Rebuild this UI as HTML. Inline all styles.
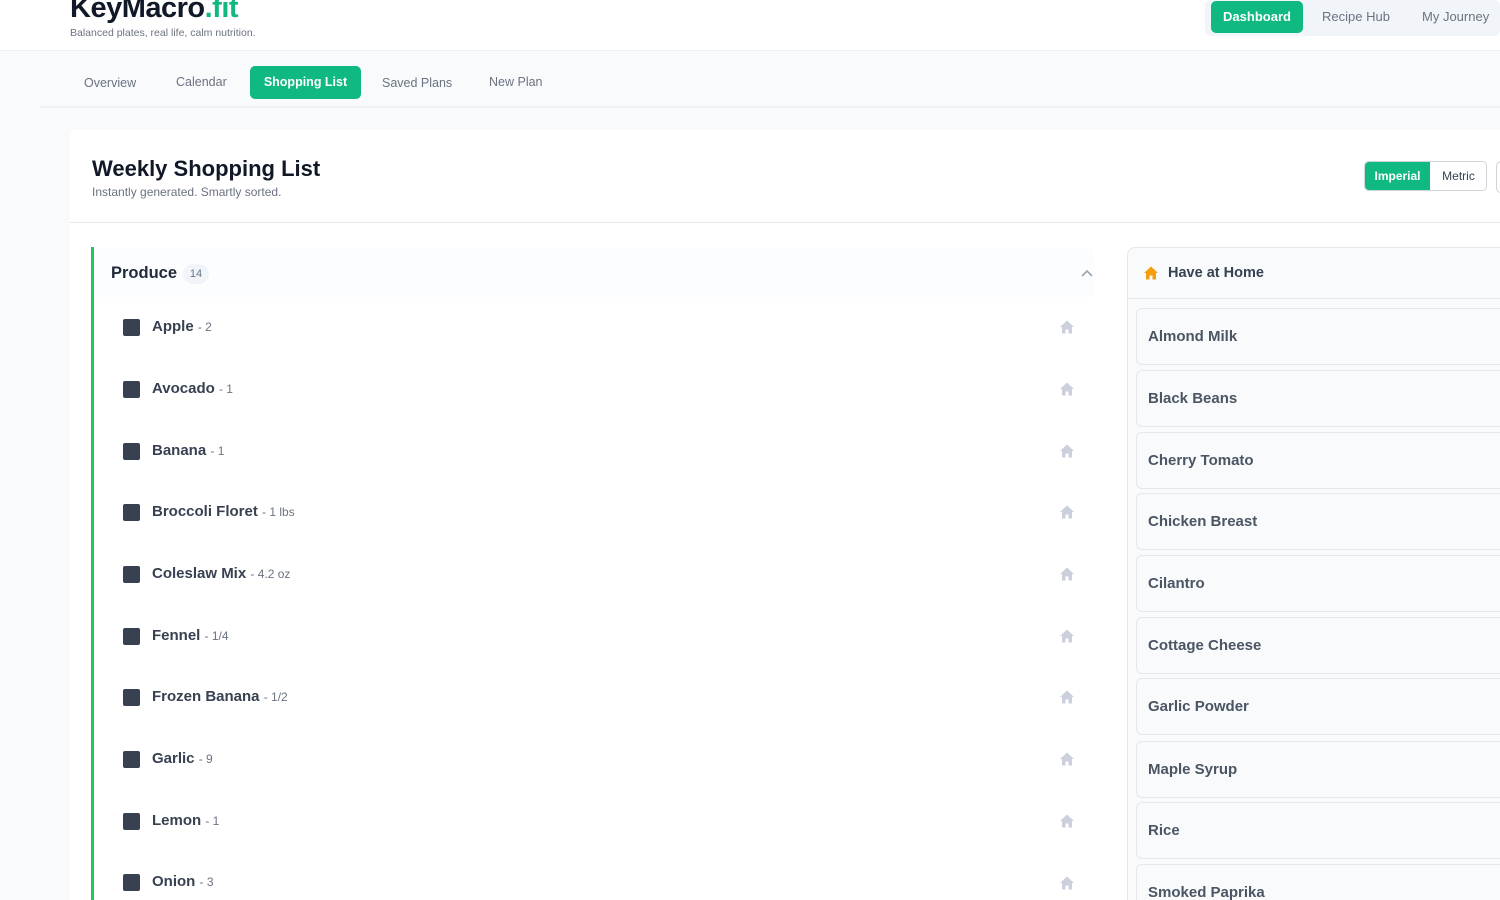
<!DOCTYPE html>
<html style="width:1500px;height:900px;overflow:hidden"><head><style>
*{margin:0;padding:0;box-sizing:border-box}
body{width:1500px;height:900px;overflow:hidden;background:#f8fafc;font-family:"Liberation Sans",sans-serif;position:relative}
.a{position:absolute}
.hdr{left:0;top:0;width:1500px;height:51px;background:#fff;border-bottom:1px solid #eef1f4}
.logo{left:70px;top:-8px;font-size:29px;font-weight:bold;color:#111827;letter-spacing:-0.5px}
.logo span{color:#10b981}
.tag{left:70px;top:27px;font-size:10.5px;color:#6b7280}
.topnav{left:1205px;top:0;width:295px;height:36px;background:#f1f5f9;border-radius:6px}
.dash{left:1211px;top:1px;width:92px;height:32px;background:#10b981;border-radius:5px;color:#fff;font-weight:bold;font-size:13px;text-align:center;line-height:32px}
.tn{top:9px;font-size:13px;color:#6b7280}
.sub{left:40px;top:106px;width:1460px;height:2px;background:#eef1f4}
.st{top:76px;font-size:12.5px;color:#6b7280}
.sl{left:250px;top:66px;width:111px;height:33px;background:#10b981;border-radius:5px;color:#fff;font-weight:bold;font-size:12.5px;text-align:center;line-height:33px}
.card{left:70px;top:130px;width:1440px;height:770px;background:#fff}
.ttl{left:92px;top:156px;font-size:22px;font-weight:bold;color:#111827}
.stt{left:92px;top:185px;font-size:12px;color:#6b7280}
.tog{left:1364px;top:161px;width:123px;height:30px;border:1px solid #d1d5db;border-radius:5px;overflow:hidden;background:#fff}
.tog div{position:absolute;top:0;height:28px;line-height:28px;font-size:12px;text-align:center}
.hl{left:70px;top:222px;width:1440px;height:1px;background:#e5e7eb}
.green{left:91px;top:247px;width:3px;height:653px;background:#22c55e}
.ph{left:94px;top:249px;width:1000px;height:48px;background:#fcfdfe}
.pt{left:111px;top:264px;font-size:16.5px;font-weight:bold;color:#1f2937}
.badge{left:183px;top:264px;width:26px;height:20px;border-radius:10px;background:#f1f5f9;font-size:11px;color:#64748b;text-align:center;line-height:20px}
.cb{left:123px;width:17px;height:17px;background:#374151;border-radius:2px}
.it{left:152px;font-size:15px;font-weight:bold;color:#374151}
.it span{font-weight:normal;font-size:12px;color:#6b7280}
.panel{left:1127px;top:247px;width:400px;height:700px;background:#f8fafc;border:1px solid #e5e7eb;border-radius:8px}
.ph2{left:1128px;top:298px;width:380px;height:1px;background:#e5e7eb}
.hat{left:1168px;top:265px;font-size:14.5px;font-weight:bold;color:#374151}
.box{left:1136px;width:380px;height:57px;border:1px solid #e5e7eb;border-radius:6px;background:#f8fafc;font-size:15px;font-weight:bold;color:#4b5563;padding-left:11px;line-height:55px}
</style></head><body>
<div class="a hdr"></div>
<div class="a logo">KeyMacro<span>.fit</span></div>
<div class="a tag">Balanced plates, real life, calm nutrition.</div>
<div class="a topnav"></div>
<div class="a dash">Dashboard</div>
<div class="a tn" style="left:1322px">Recipe Hub</div>
<div class="a tn" style="left:1422px">My Journey</div>
<div class="a sub"></div>
<div class="a st" style="left:84px">Overview</div>
<div class="a st" style="left:176px;top:75px">Calendar</div>
<div class="a sl">Shopping List</div>
<div class="a st" style="left:382px">Saved Plans</div>
<div class="a st" style="left:489px;top:75px">New Plan</div>
<div class="a card"></div>
<div class="a ttl">Weekly Shopping List</div>
<div class="a stt">Instantly generated. Smartly sorted.</div>
<div class="a tog"><div style="left:0;width:65px;background:#10b981;color:#fff;font-weight:bold">Imperial</div><div style="left:65px;width:57px;color:#374151">Metric</div></div>
<div class="a" style="left:1496px;top:161px;width:10px;height:32px;border:1px solid #d1d5db;border-radius:5px"></div>
<div class="a hl"></div>
<div class="a green"></div>
<div class="a ph"></div>
<div class="a pt">Produce</div>
<div class="a badge">14</div>
<svg class="a" style="left:1080px;top:268px" width="14" height="10" viewBox="0 0 14 10"><path d="M2 8 L7 3 L12 8" fill="none" stroke="#9ca3af" stroke-width="1.6"/></svg>

<div class="a cb" style="top:319px"></div><div class="a it" style="top:318px">Apple <span>- 2</span></div>
<div class="a cb" style="top:381px"></div><div class="a it" style="top:380px">Avocado <span>- 1</span></div>
<div class="a cb" style="top:443px"></div><div class="a it" style="top:442px">Banana <span>- 1</span></div>
<div class="a cb" style="top:504px"></div><div class="a it" style="top:503px">Broccoli Floret <span>- 1 lbs</span></div>
<div class="a cb" style="top:566px"></div><div class="a it" style="top:565px">Coleslaw Mix <span>- 4.2 oz</span></div>
<div class="a cb" style="top:628px"></div><div class="a it" style="top:627px">Fennel <span>- 1/4</span></div>
<div class="a cb" style="top:689px"></div><div class="a it" style="top:688px">Frozen Banana <span>- 1/2</span></div>
<div class="a cb" style="top:751px"></div><div class="a it" style="top:750px">Garlic <span>- 9</span></div>
<div class="a cb" style="top:813px"></div><div class="a it" style="top:812px">Lemon <span>- 1</span></div>
<div class="a cb" style="top:874px"></div><div class="a it" style="top:873px">Onion <span>- 3</span></div>

<svg width="0" height="0" style="position:absolute"><defs><symbol id="h" viewBox="0 0 16 16"><path d="M8 1.5 L15 8 H13 V14.5 H9.5 V10.5 H6.5 V14.5 H3 V8 H1 Z"/></symbol></defs></svg>
<svg class="a" style="left:1059px;top:319px" width="16" height="16" fill="#cbd0dc"><use href="#h"/></svg>
<svg class="a" style="left:1059px;top:381px" width="16" height="16" fill="#cbd0dc"><use href="#h"/></svg>
<svg class="a" style="left:1059px;top:443px" width="16" height="16" fill="#cbd0dc"><use href="#h"/></svg>
<svg class="a" style="left:1059px;top:504px" width="16" height="16" fill="#cbd0dc"><use href="#h"/></svg>
<svg class="a" style="left:1059px;top:566px" width="16" height="16" fill="#cbd0dc"><use href="#h"/></svg>
<svg class="a" style="left:1059px;top:628px" width="16" height="16" fill="#cbd0dc"><use href="#h"/></svg>
<svg class="a" style="left:1059px;top:689px" width="16" height="16" fill="#cbd0dc"><use href="#h"/></svg>
<svg class="a" style="left:1059px;top:751px" width="16" height="16" fill="#cbd0dc"><use href="#h"/></svg>
<svg class="a" style="left:1059px;top:813px" width="16" height="16" fill="#cbd0dc"><use href="#h"/></svg>
<svg class="a" style="left:1059px;top:875px" width="16" height="16" fill="#cbd0dc"><use href="#h"/></svg>

<div class="a panel" style="height:660px"></div>
<div class="a ph2"></div>
<svg class="a" style="left:1143px;top:265px" width="16" height="16" fill="#f59e0b"><use href="#h"/></svg>
<div class="a hat">Have at Home</div>
<div class="a box" style="top:308px">Almond Milk</div>
<div class="a box" style="top:370px">Black Beans</div>
<div class="a box" style="top:432px">Cherry Tomato</div>
<div class="a box" style="top:493px">Chicken Breast</div>
<div class="a box" style="top:555px">Cilantro</div>
<div class="a box" style="top:617px">Cottage Cheese</div>
<div class="a box" style="top:678px">Garlic Powder</div>
<div class="a box" style="top:741px">Maple Syrup</div>
<div class="a box" style="top:802px">Rice</div>
<div class="a box" style="top:864px;height:50px">Smoked Paprika</div>
</body></html>
